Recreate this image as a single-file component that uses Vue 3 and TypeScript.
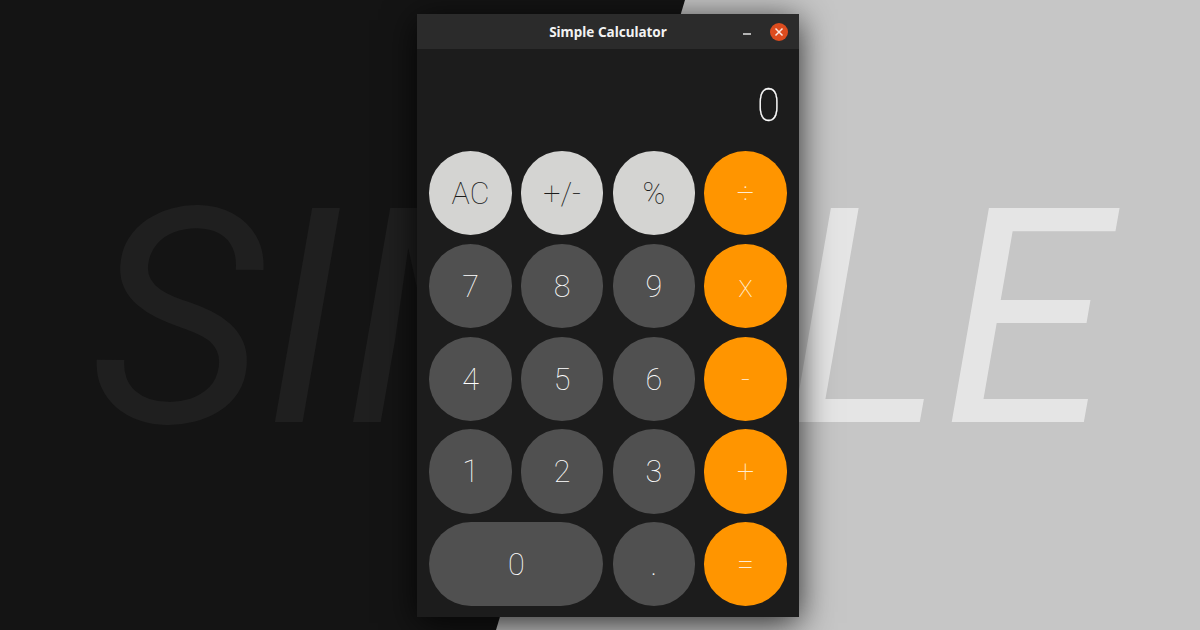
<script setup lang="ts">
type Tone = 'light' | 'dark' | 'accent'
interface Key {
  label: string
  tone: Tone
  wide?: boolean
}

const keys: Key[] = [
  { label: 'AC', tone: 'light' },
  { label: '+/-', tone: 'light' },
  { label: '%', tone: 'light' },
  { label: '÷', tone: 'accent' },
  { label: '7', tone: 'dark' },
  { label: '8', tone: 'dark' },
  { label: '9', tone: 'dark' },
  { label: 'x', tone: 'accent' },
  { label: '4', tone: 'dark' },
  { label: '5', tone: 'dark' },
  { label: '6', tone: 'dark' },
  { label: '-', tone: 'accent' },
  { label: '1', tone: 'dark' },
  { label: '2', tone: 'dark' },
  { label: '3', tone: 'dark' },
  { label: '+', tone: 'accent' },
  { label: '0', tone: 'dark', wide: true },
  { label: '.', tone: 'dark' },
  { label: '=', tone: 'accent' },
]
</script>

<template>
  <main class="stage">
    <div class="backdrop"></div>
    <div class="word">SIMPLE</div>
    <section class="window">
      <header class="titlebar">
        <h1 class="title">Simple Calculator</h1>
        <div class="controls">
          <span class="minimize"></span>
          <svg class="close" viewBox="0 0 18 18">
            <circle cx="9" cy="9" r="9" fill="#dd4c1e" />
            <path d="M5.5 5.5 L12.5 12.5 M12.5 5.5 L5.5 12.5" stroke="#fbe9e2" stroke-width="1.5" fill="none" />
          </svg>
        </div>
      </header>
      <output class="display">0</output>
      <div class="keypad">
        <button v-for="key in keys" :key="key.label" class="key" :class="[key.tone, { wide: key.wide }]">
          {{ key.label }}
        </button>
      </div>
    </section>
  </main>
</template>

<style>
body {
  margin: 0;
  overflow: hidden;
}
</style>

<style scoped>
.stage {
  position: relative;
  width: 1200px;
  height: 630px;
  box-sizing: border-box;
  padding: 14px 401px 13px 417px;
  overflow: hidden;
  background: #141414;
  font-family: Roboto, sans-serif;
}
.backdrop {
  position: absolute;
  inset: 0;
  background: #c6c6c6;
  clip-path: polygon(685px 0, 100% 0, 100% 100%, 496px 100%);
}
.word {
  position: absolute;
  left: 90px;
  top: 143px;
  width: 1100px;
  line-height: 352px;
  font-size: 301px;
  font-style: italic;
  font-weight: 400;
  letter-spacing: 0.8px;
  white-space: nowrap;
  color: transparent;
  background: linear-gradient(90deg, #1f1f1f 510px, #e5e5e5 510px);
  background-clip: text;
  -webkit-background-clip: text;
}
.window {
  position: relative;
  height: 603px;
  box-sizing: border-box;
  display: flex;
  flex-direction: column;
  background: #1c1c1c;
  box-shadow: 0 6px 32px rgba(0, 0, 0, 0.8);
}
.titlebar {
  height: 35px;
  flex: none;
  display: grid;
  grid-template-columns: 1fr auto 1fr;
  align-items: center;
  background: #2b2b2b;
}
.title {
  grid-column: 2;
  margin: 0;
  padding-top: 1px;
  font: 700 13.5px/20px "Noto Sans", sans-serif;
  color: #f2f2f2;
}
.controls {
  display: flex;
  justify-content: flex-end;
  align-items: center;
  gap: 19px;
  padding-right: 11px;
}
.minimize {
  width: 8px;
  height: 2px;
  margin-top: 4px;
  background: #b4b4b4;
}
.close {
  display: block;
  width: 18px;
  height: 18px;
}
.display {
  height: 102px;
  flex: none;
  box-sizing: border-box;
  padding: 28px 18px 0 0;
  text-align: right;
  font-size: 46px;
  line-height: 56px;
  font-weight: 100;
  color: #fff;
  -webkit-text-stroke: 0.3px #fff;
  transform: scaleX(0.9);
  transform-origin: 354px 50%;
}
.keypad {
  display: grid;
  grid-template-columns: repeat(4, 1fr);
  grid-template-rows: repeat(5, 1fr);
  gap: 8.6px 9.2px;
  height: 455.4px;
  padding: 0 12.3px 0 12.3px;
}
.key {
  margin: 0;
  padding: 2px 0 0;
  border: 0;
  border-radius: 42px;
  font: 100 30.5px/36px Roboto, sans-serif;
}
.light {
  background: #d4d4d2;
  color: #1c1c1c;
}
.dark {
  background: #505050;
  color: #fff;
}
.accent {
  background: #ff9500;
  color: #ffedd2;
}
.wide {
  grid-column: span 2;
}
</style>
